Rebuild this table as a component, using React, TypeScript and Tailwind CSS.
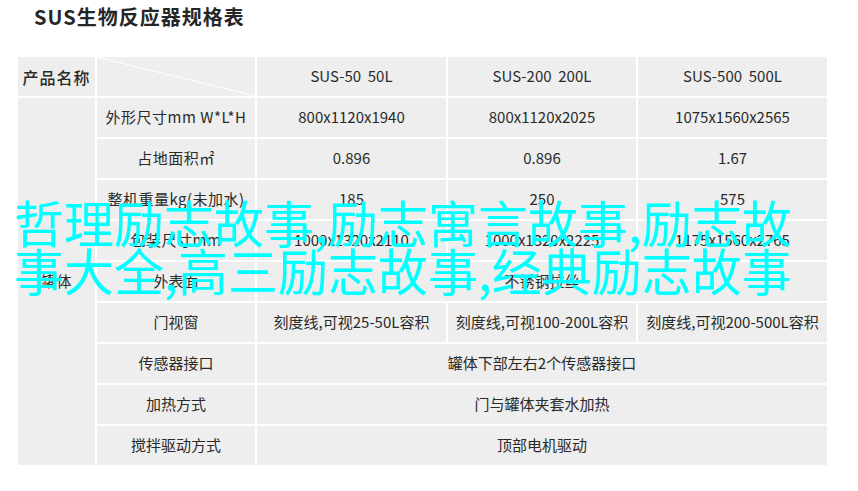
import React from "react";

const cell = "bg-[#edeeed] flex items-center justify-center text-[15px] text-[#2a2a2a] whitespace-nowrap";

export default function App() {
  const rows: [string, string, string, string][] = [
    ["外形尺寸mm W*L*H", "800x1120x1940", "800x1120x2025", "1075x1560x2565"],
    ["占地面积㎡", "0.896", "0.896", "1.67"],
    ["整机重量kg(未加水)", "185", "250", "575"],
    ["包装尺寸mm", "1000x1320x2110", "1000x1320x2225", "1175x1560x2765"],
  ];
  return (
    <div
      className="relative w-[858px] h-[491px] bg-white overflow-hidden"
      style={{ fontFamily: '"Noto Sans CJK SC", "Noto Sans", sans-serif' }}
    >
      <div className="pl-[34px] pt-[3px] h-[57px] text-[20px] font-bold text-[#262626] tracking-[1px] leading-[28px]">
        SUS生物反应器规格表
      </div>
      <div className="ml-[18px] w-[809px] grid grid-cols-[77px_158px_189px_188px_189px] grid-rows-[repeat(10,39px)] gap-[2px] bg-white">
        <div className={`${cell} text-[16px] font-medium tracking-[1px]`}>产品名称</div>
        <div className={`${cell} relative`}>
          <svg className="absolute inset-0 w-full h-full" viewBox="0 0 158 39" preserveAspectRatio="none">
            <line x1="0" y1="0" x2="158" y2="39" stroke="#ffffff" strokeWidth="1" />
          </svg>
        </div>
        <div className={cell}>SUS-50&nbsp;&nbsp;50L</div>
        <div className={cell}>SUS-200&nbsp;&nbsp;200L</div>
        <div className={cell}>SUS-500&nbsp;&nbsp;500L</div>

        <div className={`${cell} row-span-9`} style={{ gridRow: "2 / span 9", gridColumn: "1" }}>罐体</div>

        {rows.map((r) => (
          <React.Fragment key={r[0]}>
            <div className={`${cell} tracking-[0.5px]`}>{r[0]}</div>
            <div className={cell}>{r[1]}</div>
            <div className={cell}>{r[2]}</div>
            <div className={cell}>{r[3]}</div>
          </React.Fragment>
        ))}

        <div className={cell}>外表面</div>
        <div className={`${cell} col-span-3`}>不锈钢拉丝</div>

        <div className={cell}>门视窗</div>
        <div className={cell}>刻度线,可视25-50L容积</div>
        <div className={cell}>刻度线,可视100-200L容积</div>
        <div className={cell}>刻度线,可视200-500L容积</div>

        <div className={cell}>传感器接口</div>
        <div className={`${cell} col-span-3`}>罐体下部左右2个传感器接口</div>

        <div className={cell}>加热方式</div>
        <div className={`${cell} col-span-3`}>门与罐体夹套水加热</div>

        <div className={cell}>搅拌驱动方式</div>
        <div className={`${cell} col-span-3`}>顶部电机驱动</div>
      </div>

      <div className="absolute left-[14px] top-[197px] text-[50px] leading-[48px] text-[#00ffff] whitespace-nowrap">
        哲理励志故事,励志寓言故事,励志故
        <br />
        事大全,高三励志故事,经典励志故事
      </div>
    </div>
  );
}
